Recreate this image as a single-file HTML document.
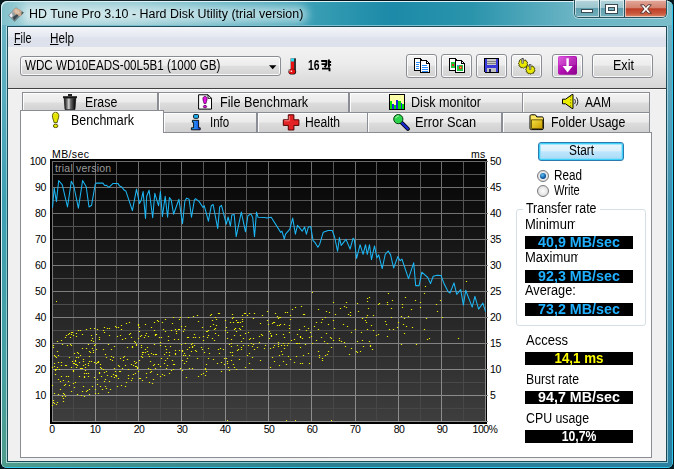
<!DOCTYPE html>
<html>
<head>
<meta charset="utf-8">
<title>HD Tune Pro 3.10 - Hard Disk Utility (trial version)</title>
<style>
html,body{margin:0;padding:0;background:#071a20;}
body{width:674px;height:469px;overflow:hidden;position:relative;font-family:"Liberation Sans",sans-serif;font-size:13px;color:#000;}
div,span,i,b{position:absolute;box-sizing:border-box;white-space:nowrap;}
svg{position:absolute;overflow:visible;}
/* window frame */
#win{left:0;top:0;width:674px;height:469px;border-radius:7px 7px 7px 7px;background:#04141a;}
#winbg{left:1px;top:1px;width:672px;height:467px;border-radius:6px 6px 6px 6px;background:linear-gradient(90deg,#7fbfca 0%,#a5d2d9 4%,#8fc8d1 20%,#3ba0b5 45%,#1c8aa8 58%,#2a94ac 70%,#6ab4c4 85%,#70b8c6 93%,#7abeca 100%);box-shadow:inset 1px 1px 0 #dcf2f6,inset -1px -1px 0 #30c8f0;}
#sideL{left:2px;top:25px;width:4px;height:438px;background:linear-gradient(180deg,#68b4c4 0%,#3fa0b4 40%,#46a0a4 75%,#4e9c8c 100%);}
#sideL2{left:6px;top:25px;width:1px;height:438px;background:linear-gradient(180deg,#c0e0e8 0%,#7cc4d0 40%,#a8d8d0 100%);}
#sideR{left:668px;top:25px;width:4px;height:438px;background:linear-gradient(180deg,#70b0c0 0%,#3f90b0 40%,#2a80a0 100%);}
#sideR2{left:667px;top:25px;width:1px;height:438px;background:linear-gradient(180deg,#b0d8e8 0%,#8cc8d8 40%,#8cc4d4 100%);}
#sideB{left:2px;top:463px;width:670px;height:4px;border-radius:0 0 5px 5px;background:linear-gradient(90deg,#4e9c8c 0%,#2a8090 48%,#2a80a0 100%);}
#sideB2{left:6px;top:462px;width:662px;height:1px;background:linear-gradient(90deg,#a8d8d0 0%,#8cc4cc 50%,#8cc4d4 100%);}
#glow{left:22px;top:6px;width:286px;height:17px;border-radius:9px;background:rgba(255,255,255,.55);filter:blur(5px);}
#clientbd{left:7px;top:26px;width:660px;height:436px;border:1px solid #1c4a56;}
#clienthi{left:6px;top:25px;width:662px;height:438px;border-top:1px solid #7cc0d0;}
#client{left:8px;top:27px;width:658px;height:434px;background:#f0f0f0;}
#wb{left:574px;top:0;width:93px;height:18px;border:1px solid #27525f;border-top:none;border-radius:0 0 5px 5px;overflow:hidden;box-shadow:0 0 0 1px rgba(255,255,255,.45);}
#wb div{top:0;height:17px;box-shadow:inset 0 0 0 1px rgba(255,255,255,.55);}
#wmin{left:0;width:25px;background:linear-gradient(#b5d5db 0%,#9cc6cf 45%,#5f9fae 50%,#74b0bd 100%);border-right:1px solid #27525f;}
#wmax{left:25px;width:25px;background:linear-gradient(#b5d5db 0%,#9cc6cf 45%,#5f9fae 50%,#74b0bd 100%);border-right:1px solid #27525f;}
#wcls{left:50px;width:42px;background:linear-gradient(#e2a99b 0%,#d4836f 45%,#bd3f27 52%,#c9583d 80%,#d98a6a 100%);}
/* text: t = 13px UI text positioned by baseline-12 ; scaled horizontally */
.t{font-size:14px;line-height:16px;transform-origin:0 0;transform:scaleX(.9286);}
#menubar{left:8px;top:27px;width:658px;height:20px;background:linear-gradient(#f3f5f9 0%,#e6e9f1 45%,#dde2ec 55%,#dce1eb 100%);}
#toolbar{left:8px;top:47px;width:658px;height:41px;background:linear-gradient(#f2f2f2 0%,#ececec 40%,#d6d6d6 100%);}
#tbline{left:8px;top:88px;width:658px;height:1px;background:#404040;}
#tbline2{left:8px;top:89px;width:658px;height:1px;background:#f8f8f8;}
.btn,#combo{border:1px solid #8a8d94;border-radius:3px;background:linear-gradient(#f4f4f4 0%,#ececec 46%,#dedede 52%,#d2d2d2 100%);box-shadow:inset 0 0 0 1px rgba(255,255,255,.85);}
#combo{left:20px;top:56px;width:261px;height:20px;}
.btn{top:54px;height:24px;width:31px;}
.tab{border:1px solid #8a8d94;border-bottom:none;background:linear-gradient(#f3f3f3 0%,#ebebeb 45%,#dcdcdc 55%,#d0d0d0 100%);box-shadow:inset 1px 1px 0 rgba(255,255,255,.9);}
.r1{top:92px;height:20px;}
.r2{top:112px;height:20px;}
#panel{left:20px;top:132px;width:632px;height:326px;background:#fff;border:1px solid #8a8d94;}
#seltab{left:20px;top:110px;width:144px;height:23px;background:#fff;border:1px solid #8a8d94;border-bottom:none;}
/* chart labels */
.yl{font-size:10.5px;text-align:right;width:30px;left:16px;line-height:12px;letter-spacing:-.4px;margin-top:0px;}
.yr{font-size:10.5px;left:490px;line-height:12px;letter-spacing:-.4px;margin-top:0px;}
.xl{font-size:10.5px;top:423px;width:40px;text-align:center;line-height:12px;letter-spacing:-.5px;}
/* right panel */
#start{left:538px;top:142px;width:86px;height:19px;border:1px solid #2c7ab0;border-radius:3px;background:linear-gradient(#eaf6fd 0%,#d9f0fc 46%,#bee6fd 52%,#a7d9f5 100%);box-shadow:inset 0 0 0 1px #3ad0f8,inset 0 0 0 2px rgba(120,220,250,.6);}
.radio{width:12px;height:12px;border-radius:50%;border:1px solid #77797e;background:radial-gradient(circle at 50% 50%,#fdfdfd 0%,#e4e4e4 60%,#cfcfcf 100%);}
.radio i{left:2px;top:2px;width:6px;height:6px;border-radius:50%;background:radial-gradient(circle at 40% 35%,#5fc0f0,#0f5fa8 55%,#0a2f6a);}
#group{left:516px;top:209px;width:130px;height:117px;border:1px solid #d5dfe5;border-radius:3px;}
.val{left:525px;width:108px;height:13px;background:#000;overflow:hidden;}
.val span{left:0;top:-2px;width:108px;text-align:center;font-weight:bold;font-size:14px;line-height:16px;transform-origin:50% 0;}
</style>
</head>
<body>
<div id="win"></div>
<div id="winbg"></div>
<div id="sideL"></div><div id="sideR"></div><div id="sideB"></div><div id="sideL2"></div><div id="sideR2"></div><div id="sideB2"></div>
<div id="wb"><div id="wmin"></div><div id="wmax"></div><div id="wcls"></div></div>
<svg style="left:574px;top:0" width="94" height="18" viewBox="0 0 94 18">
<rect x="7.5" y="9.5" width="11" height="3" fill="#fff" stroke="#3a4a52" stroke-width="1"/>
<rect x="31.5" y="4.5" width="12" height="9" fill="#fff" stroke="#3a4a52" stroke-width="1"/>
<rect x="34.5" y="7.5" width="6" height="3" fill="#7fb3bf" stroke="#3a4a52" stroke-width="1"/>
<path d="M66.5 4.8h3.4l2 2.6 2-2.6h3.4l-3.6 4.2 3.6 4.2h-3.4l-2-2.6-2 2.6h-3.4l3.6-4.2z" fill="#fff" stroke="#4a2a28" stroke-width=".9" stroke-linejoin="round"/>
</svg>
<div id="glow"></div>
<svg style="left:8px;top:6px" width="17" height="17" viewBox="8 6 17 17">
<defs><linearGradient id="hd1" x1="0" y1="0" x2="1" y2="1"><stop offset="0" stop-color="#c9d2d5"/><stop offset="1" stop-color="#46555b"/></linearGradient></defs>
<path d="M15.8 7.6L23.6 12.6 14.6 21.6 8.4 15.3z" fill="url(#hd1)" stroke="#5f777c" stroke-width=".8" stroke-opacity=".55" stroke-linejoin="round"/>
<ellipse cx="17.7" cy="12.2" rx="5" ry="3.4" fill="#c7a78e" transform="rotate(33 17.7 12.2)"/>
<ellipse cx="17" cy="11.600" rx="3" ry="2" fill="#dcc0a8" transform="rotate(33 17 11.600)"/>
<path d="M21.800 11.600l1.800 1.100-2.400 2.500z" fill="#46565c"/>
<path d="M9.300 15.200l2.300-2.300 1.200 3.100-1.600 1.600z" fill="#efe9f1"/>
<path d="M12.600 17.300l4.300-3 1.500 1.300-4.300 4.700z" fill="#3a4950"/>
</svg>
<span id="title" class="t" style="left:28.6px;top:6px;font-size:12px;transform:scaleX(1.036)">HD Tune Pro 3.10 - Hard Disk Utility (trial version)</span>
<div id="clienthi"></div>
<div id="clientbd"></div>
<div id="client"></div>
<div id="menubar"></div>
<span class="t" style="left:14.3px;top:30px;transform:scaleX(0.771)"><u>F</u>ile</span>
<span class="t" style="left:50.4px;top:30px;transform:scaleX(0.836)"><u>H</u>elp</span>
<div id="toolbar"></div>
<div id="tbline"></div><div id="tbline2"></div>
<div id="combo"></div>
<span class="t" style="left:24.9px;top:57px;transform:scaleX(0.829)">WDC WD10EADS-00L5B1 (1000 GB)</span>
<svg style="left:269px;top:65px" width="8" height="5" viewBox="0 0 8 5"><path d="M0 0.3h7.4L3.7 4.2z" fill="#000"/></svg>
<svg style="left:287px;top:57px" width="11" height="19" viewBox="287 57 11 19">
<rect x="290" y="58.300" width="1.200" height="11.500" fill="#a8a8a8"/>
<rect x="291" y="58.300" width="3.200" height="12" fill="#e81010"/>
<rect x="291" y="58.300" width="3.200" height="3.200" fill="#20e0f4"/>
<rect x="294.200" y="58.300" width="1.600" height="12" fill="#0c0c0c"/>
<ellipse cx="292.300" cy="71.700" rx="3.900" ry="2.900" fill="#141414"/>
<ellipse cx="292" cy="71.500" rx="3.300" ry="2.500" fill="#e81010"/>
<rect x="288.600" y="69" width="1.200" height="2.500" fill="#9a9a9a"/>
<rect x="290.600" y="70.600" width="1.500" height="1.300" fill="#fff"/>
</svg>
<span class="t" style="left:307.8px;top:57px;font-weight:bold;transform:scaleX(.74)">16</span>
<svg style="left:320px;top:59px" width="12" height="13" viewBox="321 59 12 13" fill="none" stroke="#000" stroke-width="1.900" stroke-linecap="butt" stroke-linejoin="miter">
<path d="M322.200 61h5.900M322.500 64.100h5M327.400 60.200v4.200l-1.700 2.900M329.900 59.500v7.900M329.900 62h2.200M329.900 64.900h2.200M323 68.600h8.300M330.500 68.600v2.600"/>
</svg>
<div class="btn" style="left:406px"></div>
<div class="btn" style="left:441px"></div>
<div class="btn" style="left:476px"></div>
<div class="btn" style="left:511px"></div>
<div class="btn" style="left:552px"></div>
<div class="btn" style="left:592px;width:61px;"></div>
<span class="t" style="left:612.7px;top:57px;transform:scaleX(0.896)">Exit</span>
<svg style="left:413px;top:57px" width="18" height="17" viewBox="413 57 18 17" shape-rendering="crispEdges"><path d="M414.5 58.5h5.5l2.5 2.5v9.5h-8z" fill="#fff" stroke="#000"/><path d="M420.5 60.5h6l3 3v9h-9z" fill="#fff" stroke="#000"/><path d="M426.5 60.5v3h3" fill="none" stroke="#000"/><path d="M416 62.5h4M416 64.5h3M416 66.5h3M416 68.5h3M422 65.5h5M422 67.5h6M422 69.5h6M422 71.5h6" stroke="#2a8cff" fill="none"/></svg><svg style="left:448px;top:57px" width="18" height="17" viewBox="413 57 18 17" shape-rendering="crispEdges"><path d="M414.5 58.5h5.5l2.5 2.5v9.5h-8z" fill="#fff" stroke="#000"/><path d="M420.5 60.5h6l3 3v9h-9z" fill="#fff" stroke="#000"/><path d="M426.5 60.5v3h3" fill="none" stroke="#000"/><rect x="416" y="62" width="4" height="6" fill="#20c840"/><rect x="417" y="64" width="2" height="2" fill="#e03020"/><rect x="422" y="65" width="6" height="6" fill="#20c840"/><rect x="424" y="66" width="3" height="3" fill="#e03020"/><rect x="425" y="67" width="1" height="1" fill="#f0f020"/><rect x="422" y="65" width="2" height="1" fill="#30a0f0"/></svg><svg style="left:483px;top:58px" width="16" height="15" viewBox="483 58 16 15" shape-rendering="crispEdges">
<path d="M484 58.5h14.5v14h-13l-1.5-1.5z" fill="#3a3ad8" stroke="#000"/>
<rect x="486.5" y="59" width="9.5" height="6" fill="#c8c8c8"/><path d="M487 61.5h8.5M487 63.500h8.500" stroke="#808080"/>
<rect x="487" y="67.5" width="8.500" height="4.500" fill="#c0c0c0"/><rect x="488.500" y="68.500" width="2" height="3" fill="#202060"/>
</svg>
<svg style="left:517px;top:57px" width="19" height="17" viewBox="517 57 19 17">
<g fill="#e8e800" stroke="#3a3a00" stroke-width=".9" stroke-linejoin="round">
<path d="M519.200 61l1.200-1.600 1.200.8 1.600-.9 1.100 1 1.400-.3.600 1.500 1.300.7-.5 1.400.7 1.300-1.300.8-.2 1.500-1.500-.1-1.100 1.100-1.300-.8-1.500.4-.6-1.400-1.400-.5.300-1.500-.9-1.200 1.100-1z"/>
<path d="M526.500 67l1.200-1.600 1.200.8 1.600-.9 1.100 1 1.400-.3.600 1.500 1.300.7-.5 1.400.7 1.300-1.300.8-.2 1.500-1.500-.1-1.100 1.100-1.300-.8-1.500.4-.6-1.400-1.400-.5.300-1.500-.9-1.200 1.100-1z"/>
</g>
<rect x="521.800" y="58.500" width="1.800" height="5" fill="#a8a8a8" stroke="#404040" stroke-width=".5"/>
<rect x="529.200" y="64.300" width="1.800" height="5" fill="#a8a8a8" stroke="#404040" stroke-width=".5"/>
</svg>
<svg style="left:558px;top:56px" width="19" height="19" viewBox="0 0 19 19">
<defs><linearGradient id="mg" x1="0" y1="0" x2="1" y2="1"><stop offset="0" stop-color="#dc4adc"/><stop offset=".5" stop-color="#b010b0"/><stop offset="1" stop-color="#8c008c"/></linearGradient></defs>
<rect x="0" y="0" width="19" height="18.700" rx="1.800" fill="url(#mg)"/>
<rect x="1" y="1" width="17" height="8" rx="1" fill="#fff" fill-opacity=".12"/>
<path d="M8.400 2.300h2.400v7.800h3.900l-5.100 6.300-5.100-6.300h3.900z" fill="#fff"/>
</svg>

<!-- tabs -->
<div class="tab r1" style="left:22px;width:136px;"></div>
<div class="tab r1" style="left:158px;width:191px;"></div>
<div class="tab r1" style="left:349px;width:174px;"></div>
<div class="tab r1" style="left:522px;width:128px;border-right:1px solid #8a8d94;"></div>
<div class="tab r2" style="left:163px;width:94px;"></div>
<div class="tab r2" style="left:257px;width:111px;"></div>
<div class="tab r2" style="left:367px;width:135px;"></div>
<div class="tab r2" style="left:502px;width:148px;"></div>
<div id="panel"></div>
<div id="seltab"></div>
<span class="t" style="left:84.6px;top:94px;transform:scaleX(0.882)">Erase</span>
<span class="t" style="left:220.4px;top:94px;transform:scaleX(0.907)">File Benchmark</span>
<span class="t" style="left:411.3px;top:94px;transform:scaleX(0.900)">Disk monitor</span>
<span class="t" style="left:584.5px;top:94px;transform:scaleX(0.857)">AAM</span>
<span class="t" style="left:70.8px;top:112px;transform:scaleX(0.891)">Benchmark</span>
<span class="t" style="left:210.3px;top:114px;transform:scaleX(0.822)">Info</span>
<span class="t" style="left:305px;top:114px;transform:scaleX(0.868)">Health</span>
<span class="t" style="left:414.8px;top:114px;transform:scaleX(0.915)">Error Scan</span>
<span class="t" style="left:550.5px;top:114px;transform:scaleX(0.885)">Folder Usage</span>
<svg style="left:62px;top:93px" width="16" height="17" viewBox="62 93 16 17">
<defs><linearGradient id="tr" x1="0" y1="0" x2="1" y2="0"><stop offset="0" stop-color="#111"/><stop offset=".25" stop-color="#7a7a7a"/><stop offset=".4" stop-color="#d8d8d8"/><stop offset=".55" stop-color="#6a6a6a"/><stop offset=".8" stop-color="#2a2a2a"/><stop offset="1" stop-color="#000"/></linearGradient></defs>
<rect x="68" y="94" width="4" height="2.200" fill="#222"/>
<path d="M63 96.200h14v2h-14z" fill="#1a1a1a"/>
<path d="M64.200 98.200h11.600l-.8 11.300h-10z" fill="url(#tr)" stroke="#000" stroke-width=".6"/>
</svg>
<svg style="left:51px;top:111px" width="10" height="18" viewBox="51 111 10 18">
<path d="M55.600 112.300c2 0 3.200 1.500 3.200 3.400 0 2.400-1.300 4.500-1.700 7h-3c-.4-2.500-1.700-4.600-1.700-7 0-1.900 1.200-3.400 3.200-3.400z" fill="#e4e400" stroke="#4a4a00" stroke-width=".9"/>
<ellipse cx="55.600" cy="125.900" rx="2.300" ry="1.700" fill="#e4e400" stroke="#4a4a00" stroke-width=".9"/>
<path d="M54.300 114c.5-.8 1.300-.9 1.800-.8" stroke="#ffffa0" stroke-width=".9" fill="none"/>
</svg>
<svg style="left:197px;top:93px" width="16" height="17" viewBox="197 93 16 17">
<path d="M198.600 94.800h9.400l3.500 3.500v10.800h-12.900z" fill="#fff" stroke="#000" stroke-width="1"/>
<path d="M208 94.800v3.500h3.500" fill="none" stroke="#000" stroke-width=".9"/>
<path d="M205 96.400c1.300 0 2.100 1 2.100 2.400 0 1.700-.9 3-1.200 4.800h-1.800c-.3-1.800-1.200-3.100-1.200-4.800 0-1.400.8-2.400 2.100-2.400z" fill="#e410e4" stroke="#500050" stroke-width=".8"/>
<ellipse cx="205" cy="106.600" rx="1.700" ry="1.200" fill="#e410e4" stroke="#500050" stroke-width=".8"/>
</svg>
<svg style="left:190px;top:113px" width="12" height="18" viewBox="190 113 12 18">
<defs><linearGradient id="ib" x1="0" y1="0" x2="1" y2="0"><stop offset="0" stop-color="#28b0ff"/><stop offset="1" stop-color="#1848e8"/></linearGradient></defs>
<rect x="193.600" y="114.600" width="4.900" height="3.700" rx=".8" fill="#22b4f4" stroke="#000" stroke-width=".9"/>
<path d="M192.400 120.300h6.200v7.500h1.600v2h-8.800v-2h2.200v-5.500h-1.200z" fill="url(#ib)" stroke="#000" stroke-width=".9" stroke-linejoin="round"/>
</svg>
<svg style="left:282px;top:113px" width="18" height="18" viewBox="282 113 18 18">
<path d="M288.300 114.800h5.600v5h5v5.600h-5v4.600h-5.600v-4.600h-5v-5.600h5z" fill="#e42424" stroke="#500" stroke-width="1" stroke-linejoin="round"/>
<path d="M289.300 116v4.800h-5" stroke="#ff8a8a" stroke-width=".9" fill="none"/>
</svg>
<svg style="left:389px;top:94px" width="16" height="16" viewBox="0 0 16 16" shape-rendering="crispEdges">
<rect x=".5" y=".5" width="15" height="15" fill="#ffffa8" stroke="#000"/>
<path d="M1 7h2v8h-2zM5 11h2v4h-2zM9 7h3v8h-3zM13 10h2v5h-2z" fill="#00e000"/>
<path d="M3 10h2v5h-2zM7 6h2v9h-2zM12 9h1v6h-1z" fill="#2424e0"/>
</svg>
<svg style="left:392px;top:113px" width="19" height="18" viewBox="392 113 19 18">
<path d="M401.600 122.600l6.300 6.300" stroke="#000" stroke-width="4" stroke-linecap="round"/>
<path d="M401.800 122.800l5.900 5.900" stroke="#1828c8" stroke-width="2.500" stroke-linecap="round"/>
<circle cx="398.300" cy="119.100" r="4.600" fill="#2cd44c" stroke="#0a3a10" stroke-width="1"/>
<path d="M395.800 118.200c.4-1.500 1.700-2.200 2.800-2.200" stroke="#c8ffd0" stroke-width="1" fill="none"/>
</svg>
<svg style="left:561px;top:93px" width="18" height="17" viewBox="561 93 18 17">
<path d="M562.500 99.200h3l6.600-4.700h.9v14h-.9l-6.600-4.700h-3z" fill="#ecec00" stroke="#000" stroke-width="1" stroke-linejoin="round"/>
<path d="M570.600 96v11" stroke="#6a6a00" stroke-width=".7" stroke-dasharray="1.500 1.500"/>
<path d="M574.600 99.200c1 1.400 1 3.200 0 4.600M576.400 97.400c1.900 2.500 1.900 5.700 0 8.200" stroke="#000" stroke-width=".9" fill="none"/>
</svg>
<svg style="left:529px;top:114px" width="16" height="17" viewBox="529 114 16 17">
<defs><linearGradient id="fo" x1="0" y1="0" x2="1" y2="1"><stop offset="0" stop-color="#f6e040"/><stop offset="1" stop-color="#c89c00"/></linearGradient></defs>
<path d="M530 116.200c0-1 .6-1.400 1.400-1.400h3.400c.8 0 1.200.4 1.500 1.200l.4.900h5.200c.9 0 1.500.5 1.500 1.400v10c0 .8-.5 1.300-1.300 1.300h-10.800c-.8 0-1.300-.5-1.300-1.300z" fill="#ffe860" stroke="#000" stroke-width="1"/>
<path d="M531.500 119.800h11v8.800h-11z" fill="url(#fo)" stroke="#4a3a00" stroke-width=".8"/>
</svg>

<!-- chart -->
<svg id="chart" style="left:50px;top:159px" width="438" height="265" viewBox="0 0 438 265" shape-rendering="crispEdges">
<defs><linearGradient id="cg" x1="0" y1="0" x2="0" y2="1"><stop offset="0" stop-color="#040404"/><stop offset="1" stop-color="#3e3e3e"/></linearGradient><linearGradient id="gmaj" gradientUnits="userSpaceOnUse" x1="0" y1="0" x2="0" y2="265"><stop offset="0" stop-color="#6c6c6c"/><stop offset="1" stop-color="#8e8e8e"/></linearGradient><linearGradient id="gmin" gradientUnits="userSpaceOnUse" x1="0" y1="0" x2="0" y2="265"><stop offset="0" stop-color="#585858"/><stop offset="1" stop-color="#464646"/></linearGradient></defs>
<rect x="0" y="0" width="437" height="265" fill="#000"/>
<rect x="2" y="2" width="434" height="261" fill="url(#cg)"/>
<path d="M23.5 2V263M2 15.5H436M66.5 2V263M2 41.5H436M110.5 2V263M2 67.5H436M153.5 2V263M2 93.5H436M196.5 2V263M2 119.5H436M240.5 2V263M2 145.5H436M283.5 2V263M2 171.5H436M326.5 2V263M2 197.5H436M370.5 2V263M2 223.5H436M413.5 2V263M2 249.5H436" stroke="url(#gmin)" stroke-width="1" fill="none"/>
<path d="M2.5 2V263M2 2.5H438M45.5 2V263M2 28.5H438M88.5 2V263M2 54.5H438M131.5 2V263M2 80.5H438M175.5 2V263M2 106.5H438M218.5 2V263M2 132.5H438M261.5 2V263M2 158.5H438M305.5 2V263M2 184.5H438M348.5 2V263M2 210.5H438M391.5 2V263M2 236.5H438M435.5 2V263M2 262.5H438" stroke="url(#gmaj)" stroke-width="1" fill="none"/>
<path shape-rendering="auto" d="M1.90 207.90h1.2v1.2h-1.2zM1.90 225.90h1.2v1.2h-1.2zM1.90 245.90h1.2v1.2h-1.2zM2.90 242.90h1.2v1.2h-1.2zM2.90 240.90h1.2v1.2h-1.2zM2.90 187.90h1.2v1.2h-1.2zM2.90 185.90h1.2v1.2h-1.2zM3.90 233.90h1.2v1.2h-1.2zM3.90 195.90h1.2v1.2h-1.2zM3.90 206.90h1.2v1.2h-1.2zM3.90 243.90h1.2v1.2h-1.2zM3.90 203.90h1.2v1.2h-1.2zM4.90 209.90h1.2v1.2h-1.2zM4.90 196.90h1.2v1.2h-1.2zM4.90 210.90h1.2v1.2h-1.2zM4.90 214.90h1.2v1.2h-1.2zM5.90 197.90h1.2v1.2h-1.2zM5.90 244.90h1.2v1.2h-1.2zM5.90 209.90h1.2v1.2h-1.2zM6.90 207.90h1.2v1.2h-1.2zM6.90 191.90h1.2v1.2h-1.2zM6.90 242.90h1.2v1.2h-1.2zM6.90 181.90h1.2v1.2h-1.2zM7.90 202.90h1.2v1.2h-1.2zM7.90 234.90h1.2v1.2h-1.2zM7.90 195.90h1.2v1.2h-1.2zM7.90 219.90h1.2v1.2h-1.2zM8.90 209.90h1.2v1.2h-1.2zM9.90 221.90h1.2v1.2h-1.2zM9.90 229.90h1.2v1.2h-1.2zM10.90 205.90h1.2v1.2h-1.2zM10.90 216.90h1.2v1.2h-1.2zM10.90 180.90h1.2v1.2h-1.2zM10.90 202.90h1.2v1.2h-1.2zM11.90 184.90h1.2v1.2h-1.2zM11.90 236.90h1.2v1.2h-1.2zM12.90 238.90h1.2v1.2h-1.2zM12.90 220.90h1.2v1.2h-1.2zM12.90 233.90h1.2v1.2h-1.2zM12.90 241.90h1.2v1.2h-1.2zM13.90 225.90h1.2v1.2h-1.2zM13.90 234.90h1.2v1.2h-1.2zM14.90 236.90h1.2v1.2h-1.2zM14.90 224.90h1.2v1.2h-1.2zM14.90 177.90h1.2v1.2h-1.2zM14.90 205.90h1.2v1.2h-1.2zM15.90 175.90h1.2v1.2h-1.2zM15.90 216.90h1.2v1.2h-1.2zM15.90 205.90h1.2v1.2h-1.2zM16.90 185.90h1.2v1.2h-1.2zM17.90 216.90h1.2v1.2h-1.2zM17.90 221.90h1.2v1.2h-1.2zM17.90 174.90h1.2v1.2h-1.2zM18.90 173.90h1.2v1.2h-1.2zM18.90 225.90h1.2v1.2h-1.2zM18.90 197.90h1.2v1.2h-1.2zM19.90 184.90h1.2v1.2h-1.2zM19.90 177.90h1.2v1.2h-1.2zM20.90 185.90h1.2v1.2h-1.2zM20.90 172.90h1.2v1.2h-1.2zM20.90 174.90h1.2v1.2h-1.2zM20.90 231.90h1.2v1.2h-1.2zM20.90 207.90h1.2v1.2h-1.2zM21.90 201.90h1.2v1.2h-1.2zM21.90 172.90h1.2v1.2h-1.2zM22.90 175.90h1.2v1.2h-1.2zM22.90 203.90h1.2v1.2h-1.2zM22.90 223.90h1.2v1.2h-1.2zM22.90 210.90h1.2v1.2h-1.2zM22.90 211.90h1.2v1.2h-1.2zM23.90 193.90h1.2v1.2h-1.2zM23.90 203.90h1.2v1.2h-1.2zM23.90 227.90h1.2v1.2h-1.2zM23.90 227.90h1.2v1.2h-1.2zM24.90 200.90h1.2v1.2h-1.2zM24.90 201.90h1.2v1.2h-1.2zM24.90 222.90h1.2v1.2h-1.2zM24.90 204.90h1.2v1.2h-1.2zM25.90 176.90h1.2v1.2h-1.2zM25.90 204.90h1.2v1.2h-1.2zM25.90 207.90h1.2v1.2h-1.2zM25.90 173.90h1.2v1.2h-1.2zM25.90 197.90h1.2v1.2h-1.2zM26.90 205.90h1.2v1.2h-1.2zM26.90 234.90h1.2v1.2h-1.2zM26.90 192.90h1.2v1.2h-1.2zM27.90 193.90h1.2v1.2h-1.2zM27.90 197.90h1.2v1.2h-1.2zM27.90 170.90h1.2v1.2h-1.2zM28.90 202.90h1.2v1.2h-1.2zM28.90 216.90h1.2v1.2h-1.2zM29.90 208.90h1.2v1.2h-1.2zM29.90 195.90h1.2v1.2h-1.2zM29.90 170.90h1.2v1.2h-1.2zM30.90 235.90h1.2v1.2h-1.2zM30.90 208.90h1.2v1.2h-1.2zM31.90 174.90h1.2v1.2h-1.2zM31.90 231.90h1.2v1.2h-1.2zM31.90 208.90h1.2v1.2h-1.2zM31.90 188.90h1.2v1.2h-1.2zM32.90 205.90h1.2v1.2h-1.2zM32.90 199.90h1.2v1.2h-1.2zM32.90 201.90h1.2v1.2h-1.2zM32.90 226.90h1.2v1.2h-1.2zM33.90 216.90h1.2v1.2h-1.2zM33.90 217.90h1.2v1.2h-1.2zM33.90 213.90h1.2v1.2h-1.2zM33.90 236.90h1.2v1.2h-1.2zM34.90 204.90h1.2v1.2h-1.2zM34.90 207.90h1.2v1.2h-1.2zM34.90 210.90h1.2v1.2h-1.2zM35.90 169.90h1.2v1.2h-1.2zM35.90 188.90h1.2v1.2h-1.2zM35.90 213.90h1.2v1.2h-1.2zM35.90 231.90h1.2v1.2h-1.2zM36.90 230.90h1.2v1.2h-1.2zM37.90 216.90h1.2v1.2h-1.2zM37.90 205.90h1.2v1.2h-1.2zM37.90 184.90h1.2v1.2h-1.2zM37.90 213.90h1.2v1.2h-1.2zM37.90 203.90h1.2v1.2h-1.2zM38.90 201.90h1.2v1.2h-1.2zM38.90 229.90h1.2v1.2h-1.2zM38.90 234.90h1.2v1.2h-1.2zM38.90 196.90h1.2v1.2h-1.2zM38.90 191.90h1.2v1.2h-1.2zM39.90 168.90h1.2v1.2h-1.2zM39.90 192.90h1.2v1.2h-1.2zM40.90 175.90h1.2v1.2h-1.2zM40.90 180.90h1.2v1.2h-1.2zM40.90 201.90h1.2v1.2h-1.2zM41.90 188.90h1.2v1.2h-1.2zM41.90 226.90h1.2v1.2h-1.2zM41.90 178.90h1.2v1.2h-1.2zM42.90 192.90h1.2v1.2h-1.2zM42.90 181.90h1.2v1.2h-1.2zM42.90 190.90h1.2v1.2h-1.2zM43.90 217.90h1.2v1.2h-1.2zM43.90 185.90h1.2v1.2h-1.2zM43.90 168.90h1.2v1.2h-1.2zM43.90 202.90h1.2v1.2h-1.2zM44.90 229.90h1.2v1.2h-1.2zM44.90 184.90h1.2v1.2h-1.2zM44.90 233.90h1.2v1.2h-1.2zM45.90 189.90h1.2v1.2h-1.2zM45.90 203.90h1.2v1.2h-1.2zM45.90 174.90h1.2v1.2h-1.2zM46.90 202.90h1.2v1.2h-1.2zM46.90 169.90h1.2v1.2h-1.2zM46.90 219.90h1.2v1.2h-1.2zM46.90 224.90h1.2v1.2h-1.2zM47.90 201.90h1.2v1.2h-1.2zM47.90 202.90h1.2v1.2h-1.2zM47.90 233.90h1.2v1.2h-1.2zM48.90 213.90h1.2v1.2h-1.2zM48.90 212.90h1.2v1.2h-1.2zM48.90 177.90h1.2v1.2h-1.2zM48.90 179.90h1.2v1.2h-1.2zM49.90 207.90h1.2v1.2h-1.2zM49.90 204.90h1.2v1.2h-1.2zM49.90 226.90h1.2v1.2h-1.2zM50.90 216.90h1.2v1.2h-1.2zM50.90 208.90h1.2v1.2h-1.2zM51.90 229.90h1.2v1.2h-1.2zM52.90 189.90h1.2v1.2h-1.2zM52.90 170.90h1.2v1.2h-1.2zM52.90 209.90h1.2v1.2h-1.2zM53.90 167.90h1.2v1.2h-1.2zM53.90 212.90h1.2v1.2h-1.2zM53.90 221.90h1.2v1.2h-1.2zM53.90 172.90h1.2v1.2h-1.2zM53.90 172.90h1.2v1.2h-1.2zM54.90 219.90h1.2v1.2h-1.2zM54.90 226.90h1.2v1.2h-1.2zM54.90 194.90h1.2v1.2h-1.2zM55.90 197.90h1.2v1.2h-1.2zM55.90 228.90h1.2v1.2h-1.2zM55.90 211.90h1.2v1.2h-1.2zM56.90 215.90h1.2v1.2h-1.2zM56.90 168.90h1.2v1.2h-1.2zM57.90 184.90h1.2v1.2h-1.2zM57.90 232.90h1.2v1.2h-1.2zM58.90 175.90h1.2v1.2h-1.2zM58.90 221.90h1.2v1.2h-1.2zM58.90 168.90h1.2v1.2h-1.2zM59.90 229.90h1.2v1.2h-1.2zM59.90 199.90h1.2v1.2h-1.2zM60.90 189.90h1.2v1.2h-1.2zM60.90 196.90h1.2v1.2h-1.2zM60.90 216.90h1.2v1.2h-1.2zM61.90 200.90h1.2v1.2h-1.2zM62.90 214.90h1.2v1.2h-1.2zM62.90 197.90h1.2v1.2h-1.2zM63.90 186.90h1.2v1.2h-1.2zM63.90 208.90h1.2v1.2h-1.2zM63.90 217.90h1.2v1.2h-1.2zM64.90 166.90h1.2v1.2h-1.2zM64.90 215.90h1.2v1.2h-1.2zM64.90 211.90h1.2v1.2h-1.2zM65.90 215.90h1.2v1.2h-1.2zM65.90 167.90h1.2v1.2h-1.2zM65.90 216.90h1.2v1.2h-1.2zM66.90 226.90h1.2v1.2h-1.2zM66.90 176.90h1.2v1.2h-1.2zM67.90 167.90h1.2v1.2h-1.2zM67.90 205.90h1.2v1.2h-1.2zM67.90 218.90h1.2v1.2h-1.2zM68.90 206.90h1.2v1.2h-1.2zM68.90 211.90h1.2v1.2h-1.2zM69.90 198.90h1.2v1.2h-1.2zM69.90 211.90h1.2v1.2h-1.2zM69.90 175.90h1.2v1.2h-1.2zM70.90 225.90h1.2v1.2h-1.2zM70.90 169.90h1.2v1.2h-1.2zM70.90 165.90h1.2v1.2h-1.2zM71.90 208.90h1.2v1.2h-1.2zM71.90 179.90h1.2v1.2h-1.2zM72.90 197.90h1.2v1.2h-1.2zM72.90 200.90h1.2v1.2h-1.2zM73.90 196.90h1.2v1.2h-1.2zM74.90 205.90h1.2v1.2h-1.2zM74.90 178.90h1.2v1.2h-1.2zM74.90 226.90h1.2v1.2h-1.2zM75.90 163.90h1.2v1.2h-1.2zM75.90 222.90h1.2v1.2h-1.2zM76.90 199.90h1.2v1.2h-1.2zM76.90 187.90h1.2v1.2h-1.2zM77.90 209.90h1.2v1.2h-1.2zM77.90 215.90h1.2v1.2h-1.2zM77.90 218.90h1.2v1.2h-1.2zM78.90 162.90h1.2v1.2h-1.2zM78.90 174.90h1.2v1.2h-1.2zM79.90 173.90h1.2v1.2h-1.2zM80.90 220.90h1.2v1.2h-1.2zM80.90 177.90h1.2v1.2h-1.2zM80.90 204.90h1.2v1.2h-1.2zM81.90 186.90h1.2v1.2h-1.2zM81.90 218.90h1.2v1.2h-1.2zM81.90 187.90h1.2v1.2h-1.2zM82.90 205.90h1.2v1.2h-1.2zM82.90 214.90h1.2v1.2h-1.2zM83.90 201.90h1.2v1.2h-1.2zM83.90 181.90h1.2v1.2h-1.2zM84.90 206.90h1.2v1.2h-1.2zM84.90 203.90h1.2v1.2h-1.2zM84.90 182.90h1.2v1.2h-1.2zM84.90 213.90h1.2v1.2h-1.2zM85.90 185.90h1.2v1.2h-1.2zM85.90 206.90h1.2v1.2h-1.2zM85.90 184.90h1.2v1.2h-1.2zM85.90 202.90h1.2v1.2h-1.2zM86.90 208.90h1.2v1.2h-1.2zM86.90 207.90h1.2v1.2h-1.2zM87.90 164.90h1.2v1.2h-1.2zM87.90 165.90h1.2v1.2h-1.2zM87.90 178.90h1.2v1.2h-1.2zM87.90 211.90h1.2v1.2h-1.2zM88.90 171.90h1.2v1.2h-1.2zM88.90 200.90h1.2v1.2h-1.2zM88.90 218.90h1.2v1.2h-1.2zM88.90 167.90h1.2v1.2h-1.2zM89.90 176.90h1.2v1.2h-1.2zM89.90 218.90h1.2v1.2h-1.2zM90.90 187.90h1.2v1.2h-1.2zM90.90 196.90h1.2v1.2h-1.2zM90.90 185.90h1.2v1.2h-1.2zM90.90 175.90h1.2v1.2h-1.2zM91.90 194.90h1.2v1.2h-1.2zM91.90 197.90h1.2v1.2h-1.2zM91.90 192.90h1.2v1.2h-1.2zM91.90 220.90h1.2v1.2h-1.2zM92.90 192.90h1.2v1.2h-1.2zM92.90 192.90h1.2v1.2h-1.2zM93.90 177.90h1.2v1.2h-1.2zM94.90 164.90h1.2v1.2h-1.2zM94.90 175.90h1.2v1.2h-1.2zM94.90 189.90h1.2v1.2h-1.2zM94.90 164.90h1.2v1.2h-1.2zM94.90 192.90h1.2v1.2h-1.2zM95.90 213.90h1.2v1.2h-1.2zM95.90 173.90h1.2v1.2h-1.2zM95.90 217.90h1.2v1.2h-1.2zM96.90 187.90h1.2v1.2h-1.2zM96.90 191.90h1.2v1.2h-1.2zM97.90 194.90h1.2v1.2h-1.2zM97.90 176.90h1.2v1.2h-1.2zM97.90 208.90h1.2v1.2h-1.2zM98.90 222.90h1.2v1.2h-1.2zM98.90 196.90h1.2v1.2h-1.2zM99.90 212.90h1.2v1.2h-1.2zM99.90 201.90h1.2v1.2h-1.2zM99.90 209.90h1.2v1.2h-1.2zM100.90 193.90h1.2v1.2h-1.2zM100.90 211.90h1.2v1.2h-1.2zM100.90 167.90h1.2v1.2h-1.2zM101.90 223.90h1.2v1.2h-1.2zM102.90 194.90h1.2v1.2h-1.2zM102.90 205.90h1.2v1.2h-1.2zM102.90 219.90h1.2v1.2h-1.2zM103.90 162.90h1.2v1.2h-1.2zM103.90 184.90h1.2v1.2h-1.2zM103.90 170.90h1.2v1.2h-1.2zM103.90 204.90h1.2v1.2h-1.2zM104.90 174.90h1.2v1.2h-1.2zM104.90 175.90h1.2v1.2h-1.2zM104.90 194.90h1.2v1.2h-1.2zM104.90 208.90h1.2v1.2h-1.2zM105.90 174.90h1.2v1.2h-1.2zM105.90 194.90h1.2v1.2h-1.2zM106.90 160.90h1.2v1.2h-1.2zM106.90 214.90h1.2v1.2h-1.2zM107.90 161.90h1.2v1.2h-1.2zM107.90 204.90h1.2v1.2h-1.2zM108.90 177.90h1.2v1.2h-1.2zM109.90 185.90h1.2v1.2h-1.2zM109.90 182.90h1.2v1.2h-1.2zM109.90 216.90h1.2v1.2h-1.2zM109.90 206.90h1.2v1.2h-1.2zM110.90 177.90h1.2v1.2h-1.2zM110.90 198.90h1.2v1.2h-1.2zM111.90 162.90h1.2v1.2h-1.2zM111.90 214.90h1.2v1.2h-1.2zM112.90 169.90h1.2v1.2h-1.2zM113.90 215.90h1.2v1.2h-1.2zM113.90 194.90h1.2v1.2h-1.2zM113.90 203.90h1.2v1.2h-1.2zM114.90 159.90h1.2v1.2h-1.2zM114.90 200.90h1.2v1.2h-1.2zM114.90 171.90h1.2v1.2h-1.2zM114.90 186.90h1.2v1.2h-1.2zM115.90 192.90h1.2v1.2h-1.2zM115.90 208.90h1.2v1.2h-1.2zM115.90 189.90h1.2v1.2h-1.2zM116.90 198.90h1.2v1.2h-1.2zM116.90 205.90h1.2v1.2h-1.2zM117.90 180.90h1.2v1.2h-1.2zM117.90 176.90h1.2v1.2h-1.2zM118.90 195.90h1.2v1.2h-1.2zM118.90 213.90h1.2v1.2h-1.2zM118.90 192.90h1.2v1.2h-1.2zM119.90 186.90h1.2v1.2h-1.2zM120.90 210.90h1.2v1.2h-1.2zM120.90 170.90h1.2v1.2h-1.2zM121.90 163.90h1.2v1.2h-1.2zM121.90 200.90h1.2v1.2h-1.2zM122.90 204.90h1.2v1.2h-1.2zM122.90 209.90h1.2v1.2h-1.2zM122.90 157.90h1.2v1.2h-1.2zM123.90 204.90h1.2v1.2h-1.2zM123.90 179.90h1.2v1.2h-1.2zM124.90 194.90h1.2v1.2h-1.2zM124.90 169.90h1.2v1.2h-1.2zM124.90 190.90h1.2v1.2h-1.2zM124.90 193.90h1.2v1.2h-1.2zM125.90 171.90h1.2v1.2h-1.2zM125.90 173.90h1.2v1.2h-1.2zM127.90 179.90h1.2v1.2h-1.2zM127.90 169.90h1.2v1.2h-1.2zM128.90 190.90h1.2v1.2h-1.2zM128.90 159.90h1.2v1.2h-1.2zM128.90 169.90h1.2v1.2h-1.2zM129.90 157.90h1.2v1.2h-1.2zM129.90 208.90h1.2v1.2h-1.2zM130.90 184.90h1.2v1.2h-1.2zM130.90 166.90h1.2v1.2h-1.2zM131.90 190.90h1.2v1.2h-1.2zM131.90 210.90h1.2v1.2h-1.2zM131.90 200.90h1.2v1.2h-1.2zM131.90 191.90h1.2v1.2h-1.2zM132.90 195.90h1.2v1.2h-1.2zM132.90 171.90h1.2v1.2h-1.2zM133.90 193.90h1.2v1.2h-1.2zM133.90 169.90h1.2v1.2h-1.2zM133.90 203.90h1.2v1.2h-1.2zM134.90 166.90h1.2v1.2h-1.2zM134.90 183.90h1.2v1.2h-1.2zM134.90 195.90h1.2v1.2h-1.2zM135.90 201.90h1.2v1.2h-1.2zM135.90 217.90h1.2v1.2h-1.2zM136.90 198.90h1.2v1.2h-1.2zM136.90 177.90h1.2v1.2h-1.2zM136.90 189.90h1.2v1.2h-1.2zM137.90 177.90h1.2v1.2h-1.2zM137.90 157.90h1.2v1.2h-1.2zM138.90 208.90h1.2v1.2h-1.2zM138.90 195.90h1.2v1.2h-1.2zM138.90 187.90h1.2v1.2h-1.2zM140.90 184.90h1.2v1.2h-1.2zM140.90 191.90h1.2v1.2h-1.2zM141.90 186.90h1.2v1.2h-1.2zM141.90 208.90h1.2v1.2h-1.2zM141.90 183.90h1.2v1.2h-1.2zM141.90 187.90h1.2v1.2h-1.2zM142.90 156.90h1.2v1.2h-1.2zM142.90 177.90h1.2v1.2h-1.2zM143.90 174.90h1.2v1.2h-1.2zM143.90 185.90h1.2v1.2h-1.2zM144.90 177.90h1.2v1.2h-1.2zM144.90 190.90h1.2v1.2h-1.2zM144.90 190.90h1.2v1.2h-1.2zM145.90 191.90h1.2v1.2h-1.2zM146.90 155.90h1.2v1.2h-1.2zM146.90 198.90h1.2v1.2h-1.2zM147.90 161.90h1.2v1.2h-1.2zM147.90 216.90h1.2v1.2h-1.2zM148.90 177.90h1.2v1.2h-1.2zM150.90 187.90h1.2v1.2h-1.2zM150.90 214.90h1.2v1.2h-1.2zM151.90 167.90h1.2v1.2h-1.2zM151.90 189.90h1.2v1.2h-1.2zM152.90 176.90h1.2v1.2h-1.2zM152.90 213.90h1.2v1.2h-1.2zM152.90 180.90h1.2v1.2h-1.2zM153.90 192.90h1.2v1.2h-1.2zM154.90 209.90h1.2v1.2h-1.2zM154.90 215.90h1.2v1.2h-1.2zM154.90 208.90h1.2v1.2h-1.2zM155.90 211.90h1.2v1.2h-1.2zM155.90 204.90h1.2v1.2h-1.2zM155.90 171.90h1.2v1.2h-1.2zM156.90 171.90h1.2v1.2h-1.2zM156.90 177.90h1.2v1.2h-1.2zM157.90 175.90h1.2v1.2h-1.2zM157.90 170.90h1.2v1.2h-1.2zM157.90 198.90h1.2v1.2h-1.2zM157.90 188.90h1.2v1.2h-1.2zM158.90 193.90h1.2v1.2h-1.2zM159.90 166.90h1.2v1.2h-1.2zM159.90 155.90h1.2v1.2h-1.2zM160.90 154.90h1.2v1.2h-1.2zM161.90 160.90h1.2v1.2h-1.2zM161.90 178.90h1.2v1.2h-1.2zM162.90 199.90h1.2v1.2h-1.2zM162.90 164.90h1.2v1.2h-1.2zM162.90 164.90h1.2v1.2h-1.2zM163.90 169.90h1.2v1.2h-1.2zM163.90 180.90h1.2v1.2h-1.2zM164.90 157.90h1.2v1.2h-1.2zM164.90 173.90h1.2v1.2h-1.2zM164.90 168.90h1.2v1.2h-1.2zM165.90 165.90h1.2v1.2h-1.2zM165.90 159.90h1.2v1.2h-1.2zM166.90 203.90h1.2v1.2h-1.2zM167.90 189.90h1.2v1.2h-1.2zM167.90 153.90h1.2v1.2h-1.2zM167.90 175.90h1.2v1.2h-1.2zM168.90 193.90h1.2v1.2h-1.2zM168.90 153.90h1.2v1.2h-1.2zM169.90 188.90h1.2v1.2h-1.2zM170.90 202.90h1.2v1.2h-1.2zM170.90 211.90h1.2v1.2h-1.2zM172.90 189.90h1.2v1.2h-1.2zM172.90 189.90h1.2v1.2h-1.2zM173.90 204.90h1.2v1.2h-1.2zM173.90 198.90h1.2v1.2h-1.2zM174.90 160.90h1.2v1.2h-1.2zM174.90 170.90h1.2v1.2h-1.2zM175.90 167.90h1.2v1.2h-1.2zM175.90 167.90h1.2v1.2h-1.2zM175.90 198.90h1.2v1.2h-1.2zM176.90 203.90h1.2v1.2h-1.2zM176.90 172.90h1.2v1.2h-1.2zM176.90 201.90h1.2v1.2h-1.2zM176.90 178.90h1.2v1.2h-1.2zM177.90 207.90h1.2v1.2h-1.2zM178.90 184.90h1.2v1.2h-1.2zM178.90 210.90h1.2v1.2h-1.2zM179.90 192.90h1.2v1.2h-1.2zM179.90 162.90h1.2v1.2h-1.2zM180.90 183.90h1.2v1.2h-1.2zM180.90 179.90h1.2v1.2h-1.2zM180.90 186.90h1.2v1.2h-1.2zM180.90 200.90h1.2v1.2h-1.2zM181.90 154.90h1.2v1.2h-1.2zM181.90 158.90h1.2v1.2h-1.2zM181.90 195.90h1.2v1.2h-1.2zM181.90 192.90h1.2v1.2h-1.2zM182.90 162.90h1.2v1.2h-1.2zM182.90 157.90h1.2v1.2h-1.2zM182.90 204.90h1.2v1.2h-1.2zM183.90 169.90h1.2v1.2h-1.2zM183.90 207.90h1.2v1.2h-1.2zM183.90 175.90h1.2v1.2h-1.2zM184.90 168.90h1.2v1.2h-1.2zM185.90 209.90h1.2v1.2h-1.2zM185.90 160.90h1.2v1.2h-1.2zM185.90 171.90h1.2v1.2h-1.2zM186.90 162.90h1.2v1.2h-1.2zM186.90 190.90h1.2v1.2h-1.2zM186.90 185.90h1.2v1.2h-1.2zM187.90 162.90h1.2v1.2h-1.2zM187.90 189.90h1.2v1.2h-1.2zM188.90 168.90h1.2v1.2h-1.2zM188.90 199.90h1.2v1.2h-1.2zM189.90 162.90h1.2v1.2h-1.2zM189.90 169.90h1.2v1.2h-1.2zM189.90 175.90h1.2v1.2h-1.2zM190.90 189.90h1.2v1.2h-1.2zM190.90 181.90h1.2v1.2h-1.2zM190.90 187.90h1.2v1.2h-1.2zM191.90 159.90h1.2v1.2h-1.2zM191.90 166.90h1.2v1.2h-1.2zM191.90 155.90h1.2v1.2h-1.2zM191.90 161.90h1.2v1.2h-1.2zM192.90 178.90h1.2v1.2h-1.2zM192.90 185.90h1.2v1.2h-1.2zM193.90 153.90h1.2v1.2h-1.2zM194.90 173.90h1.2v1.2h-1.2zM194.90 207.90h1.2v1.2h-1.2zM194.90 153.90h1.2v1.2h-1.2zM196.90 195.90h1.2v1.2h-1.2zM196.90 155.90h1.2v1.2h-1.2zM197.90 185.90h1.2v1.2h-1.2zM197.90 172.90h1.2v1.2h-1.2zM198.90 153.90h1.2v1.2h-1.2zM198.90 179.90h1.2v1.2h-1.2zM198.90 203.90h1.2v1.2h-1.2zM198.90 193.90h1.2v1.2h-1.2zM199.90 178.90h1.2v1.2h-1.2zM200.90 183.90h1.2v1.2h-1.2zM201.90 197.90h1.2v1.2h-1.2zM201.90 209.90h1.2v1.2h-1.2zM201.90 186.90h1.2v1.2h-1.2zM202.90 178.90h1.2v1.2h-1.2zM202.90 158.90h1.2v1.2h-1.2zM202.90 184.90h1.2v1.2h-1.2zM203.90 153.90h1.2v1.2h-1.2zM203.90 189.90h1.2v1.2h-1.2zM206.90 187.90h1.2v1.2h-1.2zM208.90 182.90h1.2v1.2h-1.2zM208.90 176.90h1.2v1.2h-1.2zM209.90 163.90h1.2v1.2h-1.2zM209.90 200.90h1.2v1.2h-1.2zM210.90 174.90h1.2v1.2h-1.2zM211.90 155.90h1.2v1.2h-1.2zM211.90 175.90h1.2v1.2h-1.2zM213.90 188.90h1.2v1.2h-1.2zM214.90 185.90h1.2v1.2h-1.2zM216.90 160.90h1.2v1.2h-1.2zM216.90 151.90h1.2v1.2h-1.2zM217.90 164.90h1.2v1.2h-1.2zM218.90 178.90h1.2v1.2h-1.2zM218.90 171.90h1.2v1.2h-1.2zM219.90 188.90h1.2v1.2h-1.2zM219.90 207.90h1.2v1.2h-1.2zM219.90 173.90h1.2v1.2h-1.2zM220.90 175.90h1.2v1.2h-1.2zM220.90 176.90h1.2v1.2h-1.2zM221.90 163.90h1.2v1.2h-1.2zM221.90 197.90h1.2v1.2h-1.2zM222.90 162.90h1.2v1.2h-1.2zM222.90 187.90h1.2v1.2h-1.2zM223.90 201.90h1.2v1.2h-1.2zM223.90 185.90h1.2v1.2h-1.2zM223.90 162.90h1.2v1.2h-1.2zM224.90 153.90h1.2v1.2h-1.2zM225.90 174.90h1.2v1.2h-1.2zM226.90 165.90h1.2v1.2h-1.2zM226.90 156.90h1.2v1.2h-1.2zM227.90 186.90h1.2v1.2h-1.2zM227.90 182.90h1.2v1.2h-1.2zM227.90 184.90h1.2v1.2h-1.2zM227.90 158.90h1.2v1.2h-1.2zM228.90 195.90h1.2v1.2h-1.2zM228.90 205.90h1.2v1.2h-1.2zM228.90 165.90h1.2v1.2h-1.2zM228.90 157.90h1.2v1.2h-1.2zM229.90 157.90h1.2v1.2h-1.2zM229.90 164.90h1.2v1.2h-1.2zM230.90 185.90h1.2v1.2h-1.2zM230.90 191.90h1.2v1.2h-1.2zM231.90 194.90h1.2v1.2h-1.2zM232.90 174.90h1.2v1.2h-1.2zM232.90 183.90h1.2v1.2h-1.2zM232.90 201.90h1.2v1.2h-1.2zM233.90 177.90h1.2v1.2h-1.2zM233.90 185.90h1.2v1.2h-1.2zM233.90 188.90h1.2v1.2h-1.2zM233.90 164.90h1.2v1.2h-1.2zM234.90 152.90h1.2v1.2h-1.2zM235.90 204.90h1.2v1.2h-1.2zM236.90 185.90h1.2v1.2h-1.2zM236.90 152.90h1.2v1.2h-1.2zM237.90 196.90h1.2v1.2h-1.2zM237.90 183.90h1.2v1.2h-1.2zM238.90 168.90h1.2v1.2h-1.2zM238.90 172.90h1.2v1.2h-1.2zM238.90 165.90h1.2v1.2h-1.2zM239.90 159.90h1.2v1.2h-1.2zM239.90 155.90h1.2v1.2h-1.2zM239.90 199.90h1.2v1.2h-1.2zM240.90 180.90h1.2v1.2h-1.2zM241.90 149.90h1.2v1.2h-1.2zM243.90 179.90h1.2v1.2h-1.2zM243.90 202.90h1.2v1.2h-1.2zM244.90 147.90h1.2v1.2h-1.2zM245.90 183.90h1.2v1.2h-1.2zM245.90 196.90h1.2v1.2h-1.2zM246.90 174.90h1.2v1.2h-1.2zM246.90 183.90h1.2v1.2h-1.2zM248.90 169.90h1.2v1.2h-1.2zM248.90 183.90h1.2v1.2h-1.2zM249.90 187.90h1.2v1.2h-1.2zM249.90 177.90h1.2v1.2h-1.2zM249.90 176.90h1.2v1.2h-1.2zM249.90 203.90h1.2v1.2h-1.2zM250.90 146.90h1.2v1.2h-1.2zM251.90 178.90h1.2v1.2h-1.2zM251.90 203.90h1.2v1.2h-1.2zM252.90 195.90h1.2v1.2h-1.2zM252.90 154.90h1.2v1.2h-1.2zM253.90 166.90h1.2v1.2h-1.2zM253.90 154.90h1.2v1.2h-1.2zM254.90 184.90h1.2v1.2h-1.2zM255.90 170.90h1.2v1.2h-1.2zM257.90 168.90h1.2v1.2h-1.2zM257.90 193.90h1.2v1.2h-1.2zM258.90 177.90h1.2v1.2h-1.2zM258.90 203.90h1.2v1.2h-1.2zM259.90 172.90h1.2v1.2h-1.2zM260.90 176.90h1.2v1.2h-1.2zM261.90 183.90h1.2v1.2h-1.2zM263.90 166.90h1.2v1.2h-1.2zM265.90 162.90h1.2v1.2h-1.2zM265.90 180.90h1.2v1.2h-1.2zM267.90 149.90h1.2v1.2h-1.2zM267.90 191.90h1.2v1.2h-1.2zM267.90 169.90h1.2v1.2h-1.2zM268.90 195.90h1.2v1.2h-1.2zM268.90 197.90h1.2v1.2h-1.2zM270.90 177.90h1.2v1.2h-1.2zM270.90 162.90h1.2v1.2h-1.2zM271.90 198.90h1.2v1.2h-1.2zM271.90 200.90h1.2v1.2h-1.2zM271.90 159.90h1.2v1.2h-1.2zM273.90 181.90h1.2v1.2h-1.2zM274.90 157.90h1.2v1.2h-1.2zM274.90 195.90h1.2v1.2h-1.2zM275.90 173.90h1.2v1.2h-1.2zM275.90 151.90h1.2v1.2h-1.2zM276.90 194.90h1.2v1.2h-1.2zM276.90 183.90h1.2v1.2h-1.2zM277.90 164.90h1.2v1.2h-1.2zM277.90 191.90h1.2v1.2h-1.2zM278.90 152.90h1.2v1.2h-1.2zM279.90 177.90h1.2v1.2h-1.2zM280.90 187.90h1.2v1.2h-1.2zM280.90 178.90h1.2v1.2h-1.2zM282.90 180.90h1.2v1.2h-1.2zM282.90 142.90h1.2v1.2h-1.2zM282.90 160.90h1.2v1.2h-1.2zM283.90 168.90h1.2v1.2h-1.2zM284.90 154.90h1.2v1.2h-1.2zM288.90 180.90h1.2v1.2h-1.2zM288.90 178.90h1.2v1.2h-1.2zM289.90 148.90h1.2v1.2h-1.2zM290.90 181.90h1.2v1.2h-1.2zM292.90 164.90h1.2v1.2h-1.2zM293.90 146.90h1.2v1.2h-1.2zM293.90 182.90h1.2v1.2h-1.2zM294.90 186.90h1.2v1.2h-1.2zM295.90 142.90h1.2v1.2h-1.2zM295.90 147.90h1.2v1.2h-1.2zM296.90 166.90h1.2v1.2h-1.2zM297.90 154.90h1.2v1.2h-1.2zM298.90 194.90h1.2v1.2h-1.2zM299.90 152.90h1.2v1.2h-1.2zM299.90 155.90h1.2v1.2h-1.2zM300.90 188.90h1.2v1.2h-1.2zM300.90 172.90h1.2v1.2h-1.2zM304.90 169.90h1.2v1.2h-1.2zM305.90 191.90h1.2v1.2h-1.2zM306.90 192.90h1.2v1.2h-1.2zM306.90 181.90h1.2v1.2h-1.2zM306.90 143.90h1.2v1.2h-1.2zM307.90 151.90h1.2v1.2h-1.2zM309.90 191.90h1.2v1.2h-1.2zM310.90 172.90h1.2v1.2h-1.2zM311.90 180.90h1.2v1.2h-1.2zM311.90 158.90h1.2v1.2h-1.2zM312.90 186.90h1.2v1.2h-1.2zM314.90 160.90h1.2v1.2h-1.2zM315.90 162.90h1.2v1.2h-1.2zM315.90 157.90h1.2v1.2h-1.2zM316.90 138.90h1.2v1.2h-1.2zM316.90 169.90h1.2v1.2h-1.2zM316.90 155.90h1.2v1.2h-1.2zM316.90 141.90h1.2v1.2h-1.2zM317.90 148.90h1.2v1.2h-1.2zM318.90 181.90h1.2v1.2h-1.2zM318.90 137.90h1.2v1.2h-1.2zM319.90 186.90h1.2v1.2h-1.2zM319.90 185.90h1.2v1.2h-1.2zM320.90 165.90h1.2v1.2h-1.2zM321.90 189.90h1.2v1.2h-1.2zM322.90 170.90h1.2v1.2h-1.2zM322.90 155.90h1.2v1.2h-1.2zM325.90 175.90h1.2v1.2h-1.2zM327.90 144.90h1.2v1.2h-1.2zM327.90 174.90h1.2v1.2h-1.2zM328.90 143.90h1.2v1.2h-1.2zM334.90 161.90h1.2v1.2h-1.2zM335.90 164.90h1.2v1.2h-1.2zM336.90 142.90h1.2v1.2h-1.2zM336.90 176.90h1.2v1.2h-1.2zM336.90 144.90h1.2v1.2h-1.2zM337.90 133.90h1.2v1.2h-1.2zM338.90 169.90h1.2v1.2h-1.2zM340.90 157.90h1.2v1.2h-1.2zM340.90 148.90h1.2v1.2h-1.2zM341.90 140.90h1.2v1.2h-1.2zM342.90 169.90h1.2v1.2h-1.2zM346.90 167.90h1.2v1.2h-1.2zM347.90 162.90h1.2v1.2h-1.2zM350.90 156.90h1.2v1.2h-1.2zM350.90 184.90h1.2v1.2h-1.2zM351.90 144.90h1.2v1.2h-1.2zM351.90 147.90h1.2v1.2h-1.2zM352.90 164.90h1.2v1.2h-1.2zM353.90 158.90h1.2v1.2h-1.2zM353.90 173.90h1.2v1.2h-1.2zM354.90 137.90h1.2v1.2h-1.2zM355.90 166.90h1.2v1.2h-1.2zM357.90 156.90h1.2v1.2h-1.2zM360.90 149.90h1.2v1.2h-1.2zM361.90 167.90h1.2v1.2h-1.2zM364.90 140.90h1.2v1.2h-1.2zM365.90 184.90h1.2v1.2h-1.2zM369.90 147.90h1.2v1.2h-1.2zM369.90 142.90h1.2v1.2h-1.2zM373.90 133.90h1.2v1.2h-1.2zM373.90 169.90h1.2v1.2h-1.2zM374.90 126.90h1.2v1.2h-1.2zM375.90 158.90h1.2v1.2h-1.2zM376.90 179.90h1.2v1.2h-1.2zM378.90 178.90h1.2v1.2h-1.2zM385.90 144.90h1.2v1.2h-1.2zM386.90 151.90h1.2v1.2h-1.2zM389.90 140.90h1.2v1.2h-1.2zM391.90 157.90h1.2v1.2h-1.2zM407.90 178.90h1.2v1.2h-1.2zM415.90 121.90h1.2v1.2h-1.2zM6 142h1v1h-1zM177 261h1v1h-1zM236 261h1v1h-1zM245 261h1v1h-1zM281 261h1v1h-1zM262 133h1v1h-1z" fill="#f0f000"/>
<polyline shape-rendering="auto" fill="none" stroke="#1cb6f4" stroke-width="1.05" stroke-linejoin="round" points="2.5,48.6 4.2,28.9 6.4,42.6 8.7,21.5 12.3,25.9 17.5,48.0 21.3,22.3 23.7,26.5 28.4,49.2 32.6,21.5 36.2,27.7 39.0,48.0 41.6,46.2 45.2,25.3 46.4,24.1 52.9,24.1 54.7,26.5 56.5,26.3 58.9,28.3 63.1,24.4 67.9,24.4 69.6,27.1 71.4,27.7 74.4,31.3 75.8,31.9 82.4,51.6 86.5,30.1 89.5,44.4 91.3,40.9 93.1,32.5 95.5,59.4 96.7,37.3 99.1,31.3 102.7,58.8 104.8,34.3 108.6,46.8 110.4,32.5 112.4,57.6 115.2,37.3 117.6,58.2 119.4,38.5 121.2,40.9 123.6,55.2 128.9,40.3 132.5,64.7 134.9,42.0 136.7,39.1 139.1,40.3 141.5,58.2 144.4,40.9 145.6,39.7 149.2,42.6 153.0,48.5 154.2,46.7 158.4,62.2 161.3,46.7 163.1,45.5 167.7,69.4 169.7,47.9 171.5,46.3 176.3,65.2 178.1,58.0 180.4,67.0 181.8,56.1 184.2,55.5 186.2,77.6 191.3,53.1 195.5,72.8 197.9,56.7 200.9,54.9 202.7,58.5 204.5,77.6 206.5,53.1 208.1,58.3 214.6,58.5 217.0,59.1 221.2,58.3 230.7,73.4 231.9,72.2 234.3,80.0 235.5,75.2 239.7,70.4 242.7,59.1 245.4,75.2 247.5,66.3 252.2,72.2 254.6,68.0 256.4,75.2 258.4,67.9 260.7,67.5 263.1,81.6 264.9,83.4 267.9,88.2 269.7,85.2 273.3,73.2 278.1,71.4 282.2,71.4 284.6,78.0 287.6,92.3 289.4,78.6 291.2,86.4 296.0,80.4 300.1,90.0 303.1,79.2 304.3,80.4 306.6,99.4 310.1,85.7 313.1,95.3 315.5,85.7 317.3,95.3 319.5,85.7 321.5,100.6 324.5,86.9 326.9,98.8 328.7,95.9 332.2,109.6 335.2,95.3 338.2,92.0 340.6,95.9 343.6,109.0 347.8,97.6 350.1,101.8 351.9,100.0 358.5,119.7 363.7,103.8 365.7,126.6 369.1,126.6 371.8,113.2 377.8,118.5 380.5,124.6 383.2,117.2 387.2,116.3 391.0,116.5 394.0,124.6 398.0,132.6 400.0,134.0 404.0,123.9 406.7,135.3 410.7,130.6 413.4,146.1 415.7,131.3 422.2,148.1 424.9,137.3 428.6,150.1 432.9,144.1 435.6,152.8"/>
<text x="5" y="13" font-family="Liberation Sans, sans-serif" font-size="10.5" fill="#9a9a9a" shape-rendering="auto" style="letter-spacing:.2px">trial version</text>
</svg>
<span class="yl" style="top:155px">100</span>
<span class="yl" style="top:181px">90</span>
<span class="yl" style="top:207px">80</span>
<span class="yl" style="top:233px">70</span>
<span class="yl" style="top:259px">60</span>
<span class="yl" style="top:285px">50</span>
<span class="yl" style="top:311px">40</span>
<span class="yl" style="top:337px">30</span>
<span class="yl" style="top:363px">20</span>
<span class="yl" style="top:389px">10</span>
<span style="left:52px;top:148px;font-size:10.5px;letter-spacing:.4px">MB/sec</span>
<span style="left:471px;top:148px;font-size:10.5px;letter-spacing:.3px">ms</span>
<span class="yr" style="top:155px">50</span>
<span class="yr" style="top:181px">45</span>
<span class="yr" style="top:207px">40</span>
<span class="yr" style="top:233px">35</span>
<span class="yr" style="top:259px">30</span>
<span class="yr" style="top:285px">25</span>
<span class="yr" style="top:311px">20</span>
<span class="yr" style="top:337px">15</span>
<span class="yr" style="top:363px">10</span>
<span class="yr" style="top:389px">5</span>
<span class="xl" style="left:32px">0</span>
<span class="xl" style="left:75px">10</span>
<span class="xl" style="left:119px">20</span>
<span class="xl" style="left:162px">30</span>
<span class="xl" style="left:205px">40</span>
<span class="xl" style="left:249px">50</span>
<span class="xl" style="left:292px">60</span>
<span class="xl" style="left:335px">70</span>
<span class="xl" style="left:379px">80</span>
<span class="xl" style="left:422px">90</span>
<span class="xl" style="left:465px">100%</span>

<!-- right panel -->
<div id="start"></div>
<span class="t" style="left:568.5px;top:142px;transform:scaleX(0.845)">Start</span>
<div class="radio" style="left:537px;top:170px;"><i></i></div>
<span class="t" style="left:553.6px;top:167px;transform:scaleX(0.836)">Read</span>
<div class="radio" style="left:537px;top:185px;"></div>
<span class="t" style="left:553.6px;top:182px;transform:scaleX(0.792)">Write</span>
<div id="group"></div>
<div style="left:523px;top:203px;width:77px;height:12px;background:#fff;"></div>
<span class="t" style="left:526.2px;top:200px;transform:scaleX(0.885)">Transfer rate</span>
<span class="t" style="left:525.4px;top:215.5px;width:54.2px;overflow:hidden;">Minimum</span>
<div class="val" style="top:236px;color:#1fb0ff;"><span style="transform:scaleX(1.020)">40,9 MB/sec</span></div>
<span class="t" style="left:525.4px;top:249px;width:56.5px;overflow:hidden;">Maximum</span>
<div class="val" style="top:270px;color:#1fb0ff;"><span style="transform:scaleX(1.020)">92,3 MB/sec</span></div>
<span class="t" style="left:525px;top:282px;transform:scaleX(0.91)">Average:</span>
<div class="val" style="top:303px;color:#1fb0ff;"><span style="transform:scaleX(1.020)">73,2 MB/sec</span></div>
<span class="t" style="left:525.5px;top:332px;">Access</span>
<div class="val" style="top:352px;color:#ffff00;"><span style="transform:scaleX(0.952)">14,1 ms</span></div>
<span class="t" style="left:525.5px;top:370.5px;transform:scaleX(0.873)">Burst rate</span>
<div class="val" style="top:391px;color:#fff;"><span style="transform:scaleX(1.020)">94,7 MB/sec</span></div>
<span class="t" style="left:525.6px;top:409.5px;transform:scaleX(0.881)">CPU usage</span>
<div class="val" style="top:430px;color:#fff;"><span style="transform:scaleX(0.873)">10,7%</span></div>
</body>
</html>
